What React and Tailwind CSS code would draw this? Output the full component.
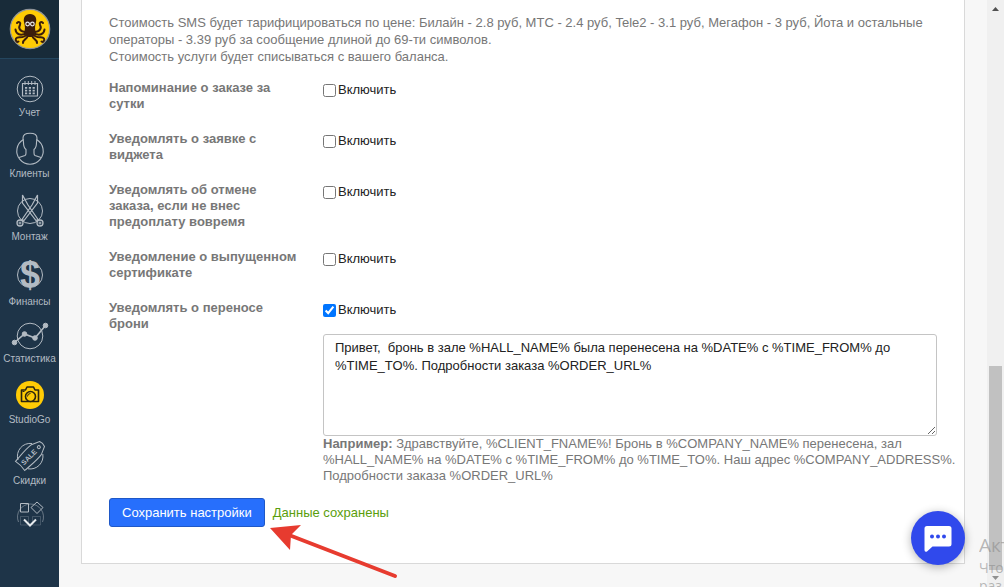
import { useState } from "react";

const sms = [
  { id: "day", label: "Напоминание о заказе за сутки" },
  { id: "widget", label: "Уведомлять о заявке с виджета" },
  { id: "cancel", label: "Уведомлять об отмене заказа, если не внес предоплату вовремя" },
  { id: "cert", label: "Уведомление о выпущенном сертификате" },
  { id: "move", label: "Уведомлять о переносе брони", on: true },
];

const moveText = "Привет,  бронь в зале %HALL_NAME% была перенесена на %DATE% с %TIME_FROM% до %TIME_TO%. Подробности заказа %ORDER_URL%";

function Calendar() {
  return (
    <svg className="h-8 w-11 overflow-visible" viewBox="-22 -16 44 32" fill="none" stroke="#b3bbc3">
      <circle r="12.8" />
      <path d="M-7.5 -5.5h15v12.5h-15z" strokeWidth="1.2" />
      <path d="M-5 -8v4M-1.7 -8v4M1.7 -8v4M5 -8v4" />
      <path d="M-5 -1.2H5.5M-5 1.6H5.5M-5 4.4H5.5" strokeWidth="1.8" strokeDasharray="2.2 1.6" />
    </svg>
  );
}

function Clients() {
  return (
    <svg className="h-[34px] w-11 overflow-visible" viewBox="-22 -17 44 34" fill="none" stroke="#b3bbc3" strokeWidth="1.1">
      <path d="M-6.5 -9.5A13.2 13.2 0 1 0 6.5 -9.5" />
      <path d="M-11 8.5L-5 6.5C-4 6 -4 5 -4 4V.5C-6 -1 -6.5 -4 -6.5 -6.5L-7 -11C-7 -14 -4.500 -15.8 0 -15.8C4.500 -15.8 7 -14 7 -11L6.5 -6.5C6.500 -4 6 -1 4 .5V4C4 5 4 6 5 6.500L11 8.5" />
    </svg>
  );
}

function Scissors() {
  return (
    <svg className="h-9 w-11 overflow-visible" viewBox="-22 -18 44 36" fill="none" stroke="#b3bbc3">
      <circle r="12.5" />
      <path d="M-7.500 -16V-8L6 9.5L8 8.500L-2 -6ZM7.500 -16V-8L-6 9.5L-8 8.500L2 -6Z" strokeWidth="1.2" />
      <circle cx="-10" cy="12" r="3" strokeWidth="1.3" />
      <circle cx="10" cy="12" r="3" strokeWidth="1.3" />
      <circle cx="-10" cy="12" r="1" />
      <circle cx="10" cy="12" r="1" />
    </svg>
  );
}

function Finance() {
  return (
    <svg className="h-[38px] w-11 overflow-visible" viewBox="-22 -19 44 38">
      <circle r="12.5" fill="none" stroke="#b3bbc3" />
      <text y="12" textAnchor="middle" fontSize="36" fontWeight="700" fill="#b3bbc3" className="font-['Liberation_Sans',Arial,sans-serif]">$</text>
    </svg>
  );
}

function Stats() {
  return (
    <svg className="h-[30px] w-11 overflow-visible" viewBox="-22 -15 44 30" fill="#b3bbc3" stroke="#b3bbc3">
      <circle r="12.8" fill="none" />
      <path d="M-15.5 6.5L-5.5 -2L5 2L15.5 -10.5" fill="none" strokeWidth="1.6" />
      <circle cx="-15.5" cy="6.5" r="2.3" />
      <circle cx="-5.5" cy="-2" r="2.3" />
      <circle cx="5" cy="2" r="2.3" />
      <circle cx="15.5" cy="-10.5" r="2.3" />
    </svg>
  );
}

function Camera() {
  return (
    <svg className="h-[34px] w-11 overflow-visible" viewBox="-22 -17 44 34" fill="none" stroke="#2a2410" strokeWidth="1.6">
      <circle r="14" fill="#ffcb05" stroke="none" />
      <path d="M-8.5 -5H-4.5L-3 -8H3.5L5 -5H8.5V6.5H-8.5Z" strokeLinejoin="round" />
      <circle cx=".5" cy="1.5" r="5" fill="#ffcb05" />
      <path d="M-2.5 1.5A3 3 0 0 1 .5 -1.5M-7.5 -3.5H-5.5" strokeWidth="1" />
    </svg>
  );
}

function Sale() {
  return (
    <svg className="h-[34px] w-11 overflow-visible" viewBox="-22 -17 44 34" fill="none" stroke="#b3bbc3">
      <path d="M-12 4A12.8 12.8 0 0 1 2 -12.5M12.8 -2A12.8 12.8 0 0 1 -2 12.8" />
      <g transform="rotate(-45)">
        <path d="M-14 -6.5C-6 -7 2 -8 9 -7L17 -3.500Q18.500 0 17 3.500L9 7C2 8 -6 7 -14 6.5C-13 2 -13 -2 -14 -6.5Z" />
        <circle cx="12.500" r="1.5" />
        <text x="-1.500" y="2.500" textAnchor="middle" fontSize="7" fontWeight="700" fill="#b3bbc3" stroke="none" className="font-['Liberation_Sans',Arial,sans-serif]">SALE</text>
      </g>
    </svg>
  );
}

function More() {
  return (
    <svg className="h-[30px] w-11 overflow-visible" viewBox="-22 -15 44 30" fill="none" stroke="#b3bbc3">
      <path d="M-11.5 7A13 13 0 1 1 12.5 7" opacity=".5" />
      <path d="M-9.5 -11.5h8v8.5h-8zM7 -13l6 5.500l-6 6l-6 -6z" />
      <path d="M-9.5 1.5h8v8.5h-8zM2.500 1.5h8v8.5h-8z" opacity=".25" />
      <path d="M-6 4.500L0 10.500L6 4.500" stroke="#e6e9ec" strokeWidth="2" />
    </svg>
  );
}

function Octopus() {
  return (
    <svg className="h-[42px] w-[42px]" viewBox="-21 -21 42 42" fill="none" stroke="#3a1d0c" strokeWidth="2" strokeLinecap="round">
      <circle r="19.7" fill="#ffcb05" stroke="#8f9499" strokeWidth="1.2" />
      <path d="M-4 3C-10 3 -12 -1 -10 -4C-9 -6.500 -11 -8 -13 -6M4 3C10 3 12 -1 10 -4C9 -6.500 11 -8 13 -6" />
      <path d="M-3 4C-10 7.500 -14 5 -14.500 .5M3 4C10 7.500 14 5 14.500 .5" />
      <path d="M-3 5C-7 11 -12 6.500 -14 9.500C-15 12 -13 13.500 -11.500 12.500M3 5C7 11 12 6.500 14 9.500C15 12 13 13.500 11.500 12.500" />
      <path d="M-2 6C-3 11 -7 10 -7 14M2 6C3 11 7 10 7 14" />
      <path d="M0 -15C5 -15 7 -11 6 -7C5 -3 4.500 0 6 4L2 8H-2L-6 4C-4.500 0 -5 -3 -6 -7C-7 -11 -5 -15 0 -15Z" fill="#3a1d0c" stroke="none" />
      <g fill="#3a1d0c" stroke="#e8e8e8" strokeWidth="1.2">
        <circle cx="-2.4" cy="-5" r="1.8" />
        <circle cx="2.4" cy="-5" r="1.8" />
      </g>
    </svg>
  );
}

const nav = [
  { label: "Учет", Icon: Calendar },
  { label: "Клиенты", Icon: Clients },
  { label: "Монтаж", Icon: Scissors },
  { label: "Финансы", Icon: Finance },
  { label: "Статистика", Icon: Stats },
  { label: "StudioGo", Icon: Camera },
  { label: "Скидки", Icon: Sale },
];

function Sidebar() {
  return (
    <aside className="flex w-[59px] shrink-0 flex-col bg-[#1e3448]">
      <a href="#home" aria-label="Главная" className="flex h-[59px] shrink-0 items-center justify-center border-b border-[#24465e] bg-[#182b39]">
        <Octopus />
      </a>
      <nav className="flex flex-col items-center gap-[13px] pt-3.5">
        {nav.map(({ label, Icon }) => (
          <a key={label} href="#" className="flex flex-col items-center gap-0.5 text-[10px] leading-3 text-[#b3bbc3]">
            <Icon />
            <span>{label}</span>
          </a>
        ))}
        <button aria-label="Ещё"><More /></button>
      </nav>
    </aside>
  );
}

function SmsRow({ item }) {
  const [on, setOn] = useState(!!item.on);
  const [text, setText] = useState(moveText);

  return (
    <div className="grid grid-cols-[192px_1fr] gap-x-[22px]">
      <div className="text-[13px] leading-4 font-bold text-[#777]">{item.label}</div>
      <div>
        <label className="flex h-5 w-fit items-center gap-0.5 text-[13px] text-[#222]">
          <input type="checkbox" className="h-[13px] w-[13px]" checked={on} onChange={(e) => setOn(e.target.checked)} />
          Включить
        </label>
        {item.on && (
          <>
            <textarea
              aria-label={item.label}
              className="mt-3.5 block h-[102px] w-full resize rounded-[3px] border border-[#c4c4c4] bg-white px-[11px] py-1 text-[13px] leading-[18px] text-[#222]"
              value={text}
              onChange={(e) => setText(e.target.value)}
            />
            <p className="-mr-5 text-[13px] leading-4 text-[#777]">
              <b>Например:</b> Здравствуйте, %CLIENT_FNAME%! Бронь в %COMPANY_NAME% перенесена, зал %HALL_NAME% на %DATE% с %TIME_FROM% до %TIME_TO%. Наш адрес %COMPANY_ADDRESS%. Подробности заказа %ORDER_URL%
            </p>
          </>
        )}
      </div>
    </div>
  );
}

function Scrollbar() {
  return (
    <div className="flex w-[17px] shrink-0 flex-col items-center bg-[#f0f0f0]" aria-hidden="true">
      <svg className="h-[17px] w-[17px]" viewBox="0 0 17 17"><path d="M5 11h7L8.500 7z" fill="#505050" /></svg>
      <div className="grow-[349]" />
      <div className="w-[13px] grow-[204] bg-[#c1c1c1]" />
      <svg className="h-[17px] w-[17px]" viewBox="0 0 17 17"><path d="M5 6h7l-3.500 4z" fill="#909090" /></svg>
    </div>
  );
}

export default function App() {
  return (
    <div className="relative flex min-h-screen overflow-hidden bg-[#f7f7f7] font-['Liberation_Sans',Arial,sans-serif]">
      <Sidebar />
      <main className="min-w-0 flex-1 px-[22px]">
        <div className="border-x border-b border-[#d9d9d9] bg-white px-[27px] pt-3.5 pb-9">
          <p className="text-[13px] leading-[17px] text-[#777]">
            Стоимость SMS будет тарифицироваться по цене: Билайн - 2.8 руб, МТС - 2.4 руб, Tele2 - 3.1 руб, Мегафон - 3 руб, Йота и остальные операторы - 3.39 руб за сообщение длиной до 69-ти символов.
            <br />
            Стоимость услуги будет списываться с вашего баланса.
          </p>
          <form className="mt-[15px]" onSubmit={(e) => e.preventDefault()}>
            <div className="flex flex-col gap-[19px]">
              {sms.map((item) => <SmsRow key={item.id} item={item} />)}
            </div>
            <div className="relative mt-3.5 flex items-center gap-2 text-[13px]">
              <button className="h-[29px] rounded-[3px] border border-[#1f58c7] bg-[#276ffc] px-3 text-white">Сохранить настройки</button>
              <span className="text-[#5a9e0c]">Данные сохранены</span>
              <svg className="absolute top-[27px] left-40 h-[54px] w-[130px]" viewBox="0 0 130 54">
                <path d="M20 10L126 51" stroke="#e73b2f" strokeWidth="4" strokeLinecap="round" />
                <path d="M1 3L32 0L22 10L21 25Z" fill="#e73b2f" />
              </svg>
            </div>
          </form>
        </div>
      </main>
      <Scrollbar />
      <button aria-label="Чат" className="absolute right-[39px] bottom-[22px] flex h-[54px] w-[54px] items-center justify-center rounded-full bg-[#3049ec] shadow-[0_2px_10px_rgba(0,0,0,0.3)]">
        <svg className="h-7 w-7" viewBox="0 0 28 28">
          <path d="M3 2H25Q27.500 2 27.500 4.500V20Q27.500 22.500 25 22.500H8.500L3 27.500Q.5 28.500 .5 26V4.500Q.5 2 3 2Z" fill="#fff" />
          <g fill="#3049ec"><circle cx="8" cy="12.500" r="2" /><circle cx="14" cy="12.500" r="2" /><circle cx="20" cy="12.500" r="2" /></g>
        </svg>
      </button>
      <div className="pointer-events-none absolute -bottom-2 right-0 w-[25px] overflow-hidden font-['Open_Sans',sans-serif] text-sm leading-[18px] whitespace-nowrap text-[#8c8c8c]/60">
        <div className="text-[19px] leading-7">Акт</div>
        <div>Что</div>
        <div>раз</div>
      </div>
    </div>
  );
}
